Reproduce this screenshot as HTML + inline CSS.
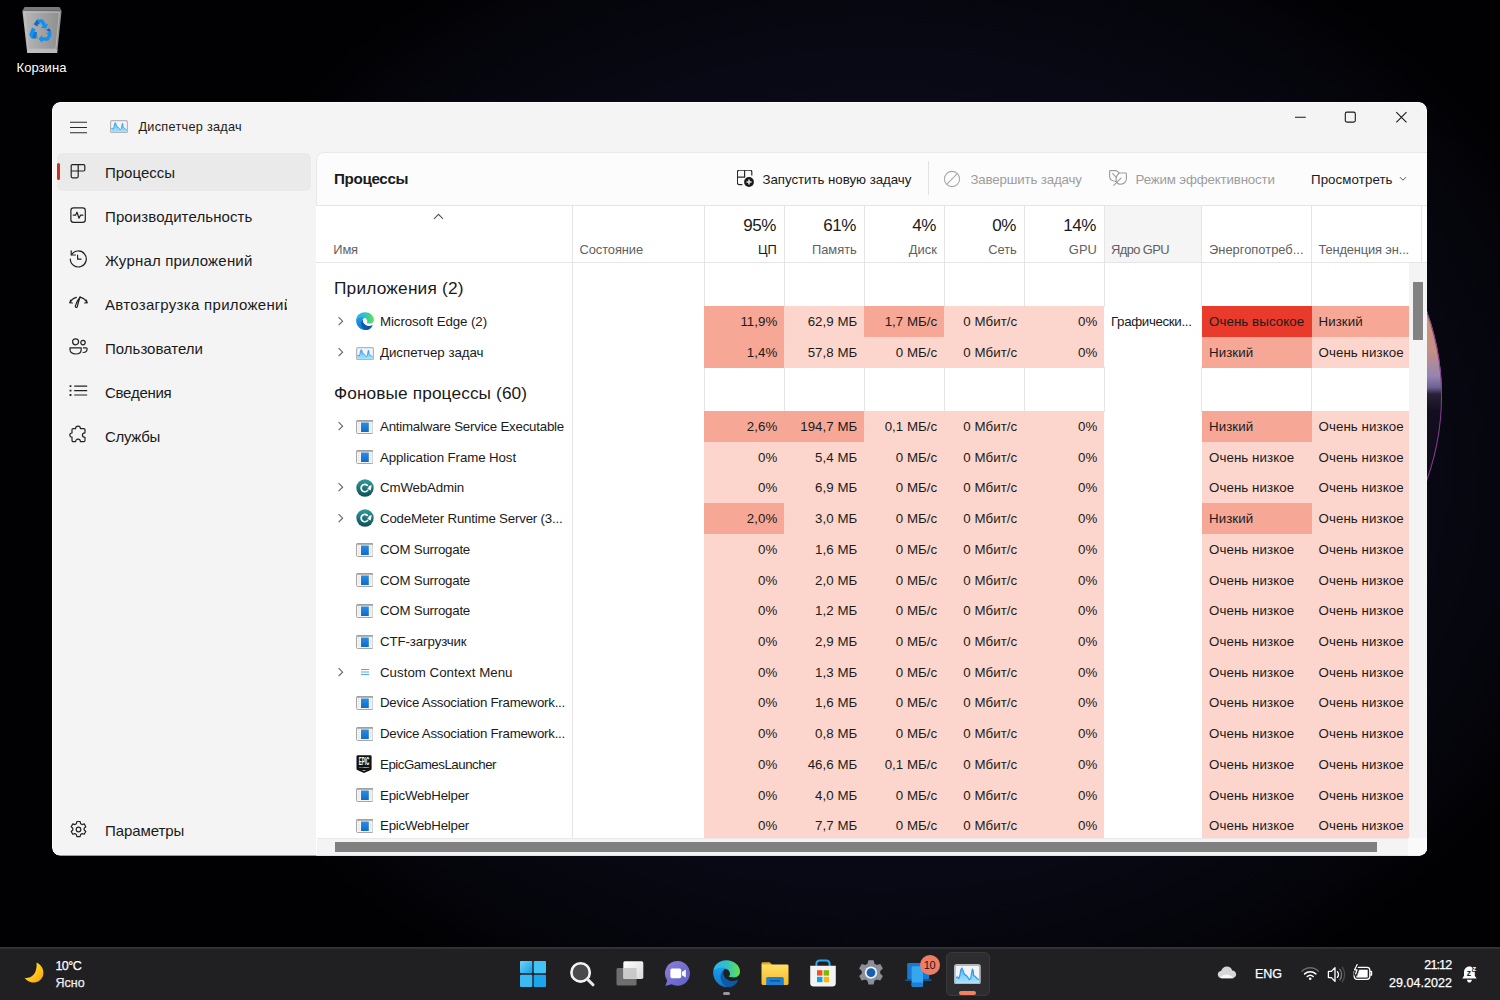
<!DOCTYPE html>
<html lang="ru"><head><meta charset="utf-8"><title>Диспетчер задач</title>
<style>
*{box-sizing:border-box;margin:0;padding:0}
html,body{width:1500px;height:1000px;overflow:hidden;background:#000}
body{position:relative;font-family:"Liberation Sans",sans-serif;color:#1a1a1a}
.abs,.t,.c,.ri,.chev,.ln,svg.a{position:absolute}
.t{white-space:nowrap;font-size:13.3px;line-height:20px;height:20px;color:#1b1b1b;letter-spacing:.08px}
.t.r{text-align:right}
.t.r{letter-spacing:.04px}
.c{display:block}
#desk{position:absolute;left:0;top:0;width:1500px;height:1000px;background:
 radial-gradient(ellipse 760px 600px at 880px 470px,#0e0d20 0%,#0c0b1c 45%,#090915 68%,#05050c 86%,#010103 100%)}
#orb{position:absolute;left:946px;top:148px;width:496px;height:496px;border-radius:50%;background:
 linear-gradient(to bottom,#c8937c 0%,#c8937c 36%,#c39084 41%,#9585b2 46%,#6d5f90 48.300%,#2a2138 49.600%,#130f1f 53%,#0c0916 70%,#0a0813 100%);box-shadow:inset 0 0 0 1px #8e3a94}
#clip{position:absolute;left:0;top:0;width:1500px;height:1000px;clip-path:inset(102px 73px 144.5px 52px round 8px)}
#win{position:absolute;left:52px;top:102px;width:1375px;height:753.5px;background:#f4f4f4;border-radius:8px;border:1px solid #fbfbfb}
#panel{position:absolute;left:316px;top:152px;width:1111px;height:704px;background:#fff;border-top-left-radius:8px;overflow:hidden}
#tool{position:absolute;left:316px;top:152px;width:1111px;height:54px;background:#fcfcfc;border-top-left-radius:8px;border-bottom:1px solid #e6e6e6;border-left:1px solid #e9e9e9;border-top:1px solid #e9e9e9}
.nav{position:absolute;left:105px;font-size:15px;line-height:22px;height:22px;color:#1a1a1a;white-space:nowrap}
.hd{position:absolute;font-size:12.9px;line-height:18px;color:#5f5f5f;white-space:nowrap}
.hp{position:absolute;font-size:17px;line-height:22px;color:#1a1a1a;text-align:right;white-space:nowrap}
.ln{background:#e5e5e5;width:1px}
.grp{position:absolute;left:334px;font-size:17.3px;line-height:24px;color:#1a1a1a;white-space:nowrap}
.tb{position:absolute;font-size:13.3px;line-height:20px;white-space:nowrap;color:#1a1a1a}
.tb.dis{color:#9d9d9d}
#bar{position:absolute;left:0;top:947px;width:1500px;height:53px;background:linear-gradient(to bottom,#353438 0,#333236 1.300px,#222224 2.300px,#202022 3px,#202022 100%)}
.tx{position:absolute;color:#fff;font-size:12px;line-height:16px;white-space:nowrap;-webkit-text-stroke:.25px #fff}
</style></head><body>
<svg width="0" height="0" style="position:absolute"><defs>
<linearGradient id="eg1" x1="0" y1="0" x2="0" y2="1"><stop offset="0" stop-color="#1f9be8"/><stop offset="1" stop-color="#0f76cf"/></linearGradient>
<linearGradient id="eg2" x1="0" y1="0" x2="1" y2="0"><stop offset="0" stop-color="#25b4f0"/><stop offset=".5" stop-color="#30c2c8"/><stop offset=".8" stop-color="#4fd57a"/><stop offset="1" stop-color="#6fe04e"/></linearGradient>
<linearGradient id="eg3" x1="0" y1="0" x2="1" y2="1"><stop offset="0" stop-color="#0b5fae"/><stop offset="1" stop-color="#0a58a6"/></linearGradient>
<g id="edgeico">
<path d="M.3 11C1 4.500 6.500.2 13.500.2 21 .2 27 5.500 27 11.500c0 3.500-2.500 5.900-6 5.900-2.500 0-4.400-.2-5.200-.8.800-.7 1.300-1.900 1.200-3.100-.3-3-3-5.300-7-5.300-4.500 0-8 1.300-9.700 2.800Z" fill="url(#eg2)"/>
<path d="M.3 11C2 8.800 5.800 7.400 10 7.400c1.300 0 2.500.3 3.500.8-1.800.6-3.300 2-4.200 3.800-2.400 4.600-.5 11 5.200 15.200C6.500 27.500-.8 20 .3 11Z" fill="url(#eg1)"/>
<path d="M10.400 10.800c-2 1.500-3.200 4-2.900 6.700.5 4.600 3.500 8.700 7 9.700 4.400.4 8.500-2.500 10.300-6.500.3-.6-.2-.9-.7-.6-1.700.9-3.700 1.200-5.700.9-4.500-.6-7.800-4-8.100-7.300-.1-1 0-2 .1-2.900Z" fill="url(#eg3)"/>
</g>
<linearGradient id="cmg" x1="0" y1="0" x2="0" y2="1"><stop offset="0" stop-color="#2f9a9c"/><stop offset="1" stop-color="#0e4f57"/></linearGradient>
<linearGradient id="exg" x1="0" y1="0" x2="0" y2="1"><stop offset="0" stop-color="#2a8ee2"/><stop offset="1" stop-color="#0f6cc9"/></linearGradient>
<linearGradient id="tmg" x1="0" y1="0" x2="0" y2="1"><stop offset="0" stop-color="#4db2f2"/><stop offset=".6" stop-color="#86d4fb"/><stop offset="1" stop-color="#a9e2fc"/></linearGradient>
<g id="tmico">
<rect x=".600" y=".600" width="16.800" height="12" rx="1.200" fill="#f1f5f9" stroke="#b4b6b9" stroke-width="1.200"/>
<path d="M1.300 11.900V8.600L2.200 8.300 3.200 9.200 4 7 4.600 3.600 5.300 2.600 6 4 7 6.600 8.400 7.400 9.400 8.600 10.200 10 11.200 9.200 11.800 6 12.300 3.200 12.900 4 13.200 7.400 14.400 8 15.600 9.400 16.700 10V11.900Z" fill="url(#tmg)"/>
<path d="M1.300 8.600L2.200 8.300 3.200 9.200 4 7 4.600 3.600 5.300 2.600 6 4 7 6.600 8.400 7.400 9.400 8.600 10.200 10 11.200 9.200 11.800 6 12.300 3.200 12.900 4 13.200 7.400 14.400 8 15.600 9.400 16.700 10" fill="none" stroke="#3b97e3" stroke-width=".800" stroke-linejoin="round"/>
</g>
</defs></svg>
<div id="desk"></div><div id="orb"></div>
<!--DESKTOP-->
<svg class="a" style="left:20px;top:5px" width="44" height="50" viewBox="0 0 44 50"><defs><linearGradient id="bg1" x1="0" y1="0" x2="1" y2="0"><stop offset="0" stop-color="#b9b9b9"/><stop offset=".5" stop-color="#a2a2a2"/><stop offset="1" stop-color="#8d8d8d"/></linearGradient></defs><path d="M4.600 2h34.800l2.200 3.800H2.400Z" fill="#7a7a7a"/><path d="M2.400 5.800h39.200L37.200 48H7.200Z" fill="url(#bg1)"/><path d="M4.400 7.200h35l-3.600 37H8.400Z" fill="none" stroke="#c6c6c6" stroke-width="1" opacity=".7"/><path d="M7 44.400h30.400l-.4 3.600H7.400Z" fill="#c2c2c2" opacity=".8"/>
<g fill="#1491ef"><path d="M17.200 14.400l5.600-.2 3.400 5.400 2-1-2 5.200-5.400-1.400 2-1.200-2.200-3.800-1.400 2.200-3.600-2.200Z"/><path d="M12 22.400l3.600 2.200-1.200 2.200 2.400.2-1.400 6.600-4.200-.4-2-3.400Z" /><path d="M31.200 26.400l.2 4.400-3 5h-6.200v2.200l-3.600-4 3.600-4v2.200h4.600l1.400-2.600-2.400-1.400Z"/></g>
<g fill="#0a62c4"><path d="M17.200 14.400l-3.600 4.800 3.600 2.200 1.600-2.800Z" opacity=".9"/><path d="M14.400 26.800l2.400.2.800 6.600-5.400-.200Z" opacity=".55"/><path d="M31.200 26.400l-2-3.200-3 1.800 2.400 1.400Z"/></g></svg>
<span class="abs" style="top:59px;left:16.500px;white-space:nowrap;color:#fff;font-size:13px;line-height:18px;text-shadow:0 1px 2px rgba(0,0,0,.9);letter-spacing:0.067px">Корзина</span>

<div id="clip">
<div id="win"></div>
<!--CHROME-->
<svg class="a" style="left:70px;top:121px" width="18" height="13" viewBox="0 0 18 13"><path d="M0 1.300h17M0 6.500h17M0 11.700h17" stroke="#2a2a2a" stroke-width="1.100"/></svg>
<svg class="a" style="left:110px;top:119.600px" width="18" height="13.200" viewBox="0 0 18 13.200"><use href="#tmico"/></svg>
<span class="abs" style="left:138.500px;top:117px;font-size:12.700px;line-height:20px;white-space:nowrap;color:#1a1a1a;letter-spacing:0.282px">Диспетчер задач</span>
<svg class="a" style="left:1294px;top:111px" width="114" height="13" viewBox="0 0 114 13">
<path d="M1 6.300h10.800" stroke="#1a1a1a" stroke-width="1.100"/>
<rect x="51.300" y="1.100" width="10" height="10" rx="1.600" fill="none" stroke="#1a1a1a" stroke-width="1.100"/>
<path d="M102.300 1.100L112.500 11.300M112.500 1.100L102.300 11.300" stroke="#1a1a1a" stroke-width="1.100"/>
</svg>
<!--SIDEBAR-->
<i class="abs" style="left:57px;top:152.500px;width:254px;height:38.500px;background:#eaeaea;border-radius:5px"></i>
<i class="abs" style="left:57px;top:163px;width:3px;height:17px;background:#c8301f;border-radius:2px"></i>
<span class="nav" style="top:161.500px;letter-spacing:-0.002px">Процессы</span>
<span class="nav" style="top:205.500px;letter-spacing:0.106px">Производительность</span>
<span class="nav" style="top:249.500px;letter-spacing:0.190px">Журнал приложений</span>
<span class="nav" style="top:293.500px;width:181.700px;overflow:hidden;letter-spacing:.3px">Автозагрузка приложений</span>
<span class="nav" style="top:337.500px;letter-spacing:0.008px">Пользователи</span>
<span class="nav" style="top:381.500px;letter-spacing:-0.254px">Сведения</span>
<span class="nav" style="top:425.500px;letter-spacing:-0.307px">Службы</span>
<span class="nav" style="top:819.500px;letter-spacing:-0.085px">Параметры</span>
<!-- processes -->
<svg class="a" style="left:70px;top:163px" width="16" height="16" viewBox="0 0 16 16" fill="none" stroke="#222" stroke-width="1.200"><path d="M2.400 1.600h11.200a1.200 1.200 0 0 1 1.200 1.200v4a1.200 1.200 0 0 1-1.200 1.200H8.200v5.600a1.200 1.200 0 0 1-1.200 1.200H2.400a1.200 1.200 0 0 1-1.200-1.200V2.800a1.200 1.200 0 0 1 1.200-1.200Z"/><path d="M8.200 1.600v6.400M1.200 8h7"/></svg>
<!-- performance -->
<svg class="a" style="left:70px;top:207px" width="16" height="16" viewBox="0 0 16 16" fill="none" stroke="#222" stroke-width="1.200"><rect x=".900" y=".900" width="14.400" height="14.400" rx="2.600"/><path d="M3.300 8.200h2.200l1.500-3 2 6 1.500-3h2.400" stroke-linejoin="round" stroke-linecap="round"/></svg>
<!-- history -->
<svg class="a" style="left:69px;top:249px" width="19" height="19" viewBox="0 0 19 19" fill="none" stroke="#222" stroke-width="1.200" stroke-linecap="round"><path d="M2.600 5.600A8 8 0 1 1 1.300 10"/><path d="M2.200 1.800v4.200h4.200"/><path d="M8.600 6v4.200h3.400"/></svg>
<!-- startup -->
<svg class="a" style="left:69px;top:295px" width="19" height="15" viewBox="0 0 19 15" fill="none" stroke="#222" stroke-width="1.200" stroke-linecap="round"><path d="M1 7.600A9.600 9.600 0 0 1 7.400 2.300M11.600 2.300A9.600 9.600 0 0 1 18 7.600"/><path d="M1.600 5.200L1 7.700l2.400.3M15.600 8l2.400-.3-.6-2.500"/><path d="M11.400 1.400C10 4.600 9 8.300 8.300 11.600c-.3 1.400-2.300.9-2-.5C7.400 7.600 9.200 4.200 11.400 1.400Z"/></svg>
<!-- users -->
<svg class="a" style="left:69px;top:338px" width="19" height="17" viewBox="0 0 19 17" fill="none" stroke="#222" stroke-width="1.200"><circle cx="6.600" cy="3.800" r="3"/><circle cx="14" cy="4.600" r="2.200"/><path d="M1 9.800h11.200v1.600c0 3-2.400 4.600-5.600 4.600S1 14.400 1 11.400Z" stroke-linejoin="round"/><path d="M14.400 9.800h2.800c.5 0 .9.400.9.900 0 2.400-1.500 3.800-4 3.800" stroke-linecap="round"/></svg>
<!-- details -->
<svg class="a" style="left:69px;top:384px" width="19" height="14" viewBox="0 0 19 14" fill="none" stroke="#222" stroke-width="1.200"><path d="M5.200 2.200h13M5.200 6.600h13M5.200 11h13"/><path d="M.600 2.200h1.800M.600 6.600h1.800M.600 11h1.800" stroke-width="1.800"/></svg>
<!-- services -->
<svg class="a" style="left:69px;top:425px" width="19" height="19" viewBox="0 0 19 19" fill="none" stroke="#222" stroke-width="1.200" stroke-linejoin="round"><path d="M6.600 3.600c0-1.400 1.100-2.400 2.400-2.400s2.400 1 2.400 2.400h3.400c.7 0 1.200.5 1.200 1.200v3c-1.500 0-2.600 1-2.600 2.300s1.100 2.300 2.600 2.300v3c0 .7-.5 1.200-1.200 1.200h-3.400c0-1.400-1.100-2.400-2.400-2.400s-2.400 1-2.400 2.400H4.200c-.7 0-1.200-.5-1.200-1.200v-3.200c-1.300 0-2.200-1-2.200-2.100s.9-2.100 2.200-2.100V4.800c0-.7.500-1.200 1.200-1.200Z"/></svg>
<!-- settings gear -->
<svg class="a" style="left:69px;top:820px" width="19" height="19" viewBox="0 0 19 19" fill="none" stroke="#222" stroke-width="1.200" stroke-linejoin="round"><circle cx="9.500" cy="9.500" r="2.300"/><path d="M7.900 1.500h3.200l.5 2.200 1.500.9 2.100-.7 1.600 2.800-1.600 1.500v1.800l1.600 1.500-1.600 2.800-2.100-.7-1.500.9-.5 2.200H7.900l-.5-2.200-1.500-.9-2.100.7-1.600-2.800 1.600-1.500V8.200L2.200 6.700l1.600-2.800 2.100.7 1.500-.9Z"/></svg>

<div id="panel"></div>
<div id="tool"></div>
<!--TOOLBAR-->
<span class="abs" style="left:334px;top:168px;font-size:15.200px;font-weight:700;line-height:22px;white-space:nowrap;color:#1a1a1a;letter-spacing:-.350px">Процессы</span>
<svg class="a" style="left:737px;top:170px" width="18" height="18" viewBox="0 0 18 18" fill="none" stroke="#2a2a2a" stroke-width="1.200"><path d="M5.400 14.600H2.200a1.800 1.800 0 0 1-1.800-1.800V2A1.800 1.800 0 0 1 2.200.2H13a1.800 1.800 0 0 1 1.800 1.800v3.400"/><path d="M7.600.2v7H.400"/><circle cx="12" cy="12" r="4.900" fill="#1b1b1b" stroke="none"/><path d="M12 9.500v5M9.500 12h5" stroke="#e9e9e9" stroke-width="1.500"/></svg>
<span class="tb" style="left:762.500px;top:169.500px;letter-spacing:-0.044px">Запустить новую задачу</span>
<i class="abs" style="left:928px;top:161px;width:1px;height:34px;background:#e2e2e2"></i>
<svg class="a" style="left:943px;top:169.500px" width="18" height="18" viewBox="0 0 18 18" fill="none" stroke="#a9a9a9" stroke-width="1.100"><circle cx="9" cy="9" r="7.600"/><path d="M3.700 14.300L14.300 3.700"/></svg>
<span class="tb dis" style="left:970.500px;top:169.500px;letter-spacing:-0.167px">Завершить задачу</span>
<svg class="a" style="left:1108.800px;top:170.200px" width="18" height="16" viewBox="0 0 18 16" fill="none" stroke="#9e9e9e" stroke-width="1.100" stroke-linecap="round" stroke-linejoin="round"><path d="M10.200 3.200C9.400 1.600 8 .600 6.200.600H1.400Q.600.600.600 1.400V6.500C.600 9.200 3.200 11 6.900 11.500"/><path d="M10 3H16.600Q17.400 3 17.400 3.800V9C17.400 12 14.500 14.200 11.200 14.200 9.500 14.200 8 13 7.200 11.400 6.800 9 7.400 5.500 10 3Z"/><path d="M12 8.200L4.800 15.400M3.600 3.600L6.900 6.800"/></svg>
<span class="tb dis" style="left:1135.500px;top:169.500px;letter-spacing:-0.153px">Режим эффективности</span>
<span class="tb" style="left:1311px;top:169.500px;letter-spacing:0.082px">Просмотреть</span>
<svg class="a" style="left:1399px;top:175.500px" width="8" height="6" viewBox="0 0 8 6" fill="none" stroke="#555" stroke-width="1"><path d="M1 1.200l3 3 3-3"/></svg>
<!--HEADER-->
<i class="abs" style="left:1104.500px;top:206px;width:97px;height:56px;background:#f5f5f5"></i>
<i class="abs" style="left:316px;top:262px;width:1111px;height:1px;background:#e6e6e6"></i>
<i class="ln" style="left:572px;top:206px;height:632px"></i>
<i class="ln" style="left:703.500px;top:206px;height:101px"></i>
<i class="ln" style="left:783.500px;top:206px;height:101px"></i>
<i class="ln" style="left:863.500px;top:206px;height:101px"></i>
<i class="ln" style="left:943.500px;top:206px;height:101px"></i>
<i class="ln" style="left:1023.500px;top:206px;height:101px"></i>
<i class="ln" style="left:1104px;top:206px;height:101px"></i>
<i class="ln" style="left:1201px;top:206px;height:101px"></i>
<i class="ln" style="left:1311px;top:206px;height:101px"></i>
<i class="ln" style="left:1420.500px;top:206px;height:56px"></i>
<i class="ln" style="left:703.500px;top:367px;height:45px"></i>
<i class="ln" style="left:783.500px;top:367px;height:45px"></i>
<i class="ln" style="left:863.500px;top:367px;height:45px"></i>
<i class="ln" style="left:943.500px;top:367px;height:45px"></i>
<i class="ln" style="left:1023.500px;top:367px;height:45px"></i>
<i class="ln" style="left:1104px;top:367px;height:45px"></i>
<i class="ln" style="left:1201px;top:367px;height:45px"></i>
<i class="ln" style="left:1311px;top:367px;height:45px"></i>
<svg class="a" style="left:433.300px;top:213px" width="11" height="7" viewBox="0 0 11 7" fill="none" stroke="#555" stroke-width="1.150"><path d="M1 5.800L5.500 1.400 10 5.800"/></svg>
<span class="hd" style="left:333.300px;top:241px;letter-spacing:-0.170px">Имя</span>
<span class="hd" style="left:579.500px;top:241px;letter-spacing:-0.092px">Состояние</span>
<span class="hp" style="left:704px;width:72px;letter-spacing:-.45px;top:215px">95%</span>
<span class="hp" style="left:784px;width:72px;letter-spacing:-.45px;top:215px">61%</span>
<span class="hp" style="left:864px;width:72px;letter-spacing:-.45px;top:215px">4%</span>
<span class="hp" style="left:944px;width:72px;letter-spacing:-.45px;top:215px">0%</span>
<span class="hp" style="left:1024px;width:72px;letter-spacing:-.45px;top:215px">14%</span>
<span class="hd" style="left:704px;width:72.800px;text-align:right;top:241px;color:#1a1a1a">ЦП</span>
<span class="hd" style="left:784px;width:72.800px;text-align:right;top:241px">Память</span>
<span class="hd" style="left:864px;width:72.800px;text-align:right;top:241px">Диск</span>
<span class="hd" style="left:944px;width:72.800px;text-align:right;top:241px">Сеть</span>
<span class="hd" style="left:1024px;width:72.800px;text-align:right;top:241px">GPU</span>
<span class="hd" style="left:1111px;top:241px;letter-spacing:-0.586px">Ядро GPU</span>
<span class="hd" style="left:1209px;top:241px;letter-spacing:0.006px">Энергопотреб...</span>
<span class="hd" style="left:1318.500px;top:241px;letter-spacing:-0.156px">Тенденция эн...</span>
<span class="grp" style="top:276px;letter-spacing:0.191px">Приложения (2)</span>
<span class="grp" style="top:381px;letter-spacing:0.102px">Фоновые процессы (60)</span>

<i class="c" style="left:704px;top:306.4px;width:80px;height:30.72px;background:#f6a796"></i>
<i class="c" style="left:784px;top:306.4px;width:80px;height:30.72px;background:#fcd6cc"></i>
<i class="c" style="left:864px;top:306.4px;width:80px;height:30.72px;background:#f6a796"></i>
<i class="c" style="left:944px;top:306.4px;width:80px;height:30.72px;background:#fcd6cc"></i>
<i class="c" style="left:1024px;top:306.4px;width:80px;height:30.72px;background:#fcd6cc"></i>
<i class="c" style="left:1202px;top:306.4px;width:109.5px;height:30.72px;background:#e83b2b"></i>
<i class="c" style="left:1311.5px;top:306.4px;width:97px;height:30.72px;background:#f6a796"></i>
<svg class="chev" style="left:337px;top:316.16px" width="8" height="11" viewBox="0 0 8 11"><path d="M1.6 1.2L5.6 5.2L1.6 9.2" fill="none" stroke="#666" stroke-width="1.15"/></svg>
<svg class="ri" style="left:355.5px;top:311.76px" width="18" height="18.300" viewBox="0 0 27 27.500"><use href="#edgeico"/></svg>
<span class="t n" style="left:380px;top:312.31px;letter-spacing:-0.091px">Microsoft Edge (2)</span>
<span class="t r" style="left:704px;width:73.3px;top:312.31px">11,9%</span>
<span class="t r" style="left:784px;width:73.3px;top:312.31px">62,9 МБ</span>
<span class="t r" style="left:864px;width:73.3px;top:312.31px">1,7 МБ/с</span>
<span class="t r" style="left:944px;width:73.3px;top:312.31px">0 Мбит/с</span>
<span class="t r" style="left:1024px;width:73.3px;top:312.31px">0%</span>
<span class="t" style="left:1111px;top:312.31px;letter-spacing:-0.340px">Графически...</span>
<span class="t" style="left:1209px;top:312.31px">Очень высокое</span>
<span class="t" style="left:1318.5px;top:312.31px">Низкий</span>
<i class="c" style="left:704px;top:337.12px;width:80px;height:30.72px;background:#f6a796"></i>
<i class="c" style="left:784px;top:337.12px;width:80px;height:30.72px;background:#fcd6cc"></i>
<i class="c" style="left:864px;top:337.12px;width:80px;height:30.72px;background:#fcd6cc"></i>
<i class="c" style="left:944px;top:337.12px;width:80px;height:30.72px;background:#fcd6cc"></i>
<i class="c" style="left:1024px;top:337.12px;width:80px;height:30.72px;background:#fcd6cc"></i>
<i class="c" style="left:1202px;top:337.12px;width:109.5px;height:30.72px;background:#f6a796"></i>
<i class="c" style="left:1311.5px;top:337.12px;width:97px;height:30.72px;background:#fcd6cc"></i>
<svg class="chev" style="left:337px;top:346.88px" width="8" height="11" viewBox="0 0 8 11"><path d="M1.6 1.2L5.6 5.2L1.6 9.2" fill="none" stroke="#666" stroke-width="1.15"/></svg>
<svg class="ri" style="left:355.5px;top:346.68px" width="18" height="13.200" viewBox="0 0 18 13.200"><use href="#tmico"/></svg>
<span class="t n" style="left:380px;top:343.03px;letter-spacing:-0.035px">Диспетчер задач</span>
<span class="t r" style="left:704px;width:73.3px;top:343.03px">1,4%</span>
<span class="t r" style="left:784px;width:73.3px;top:343.03px">57,8 МБ</span>
<span class="t r" style="left:864px;width:73.3px;top:343.03px">0 МБ/с</span>
<span class="t r" style="left:944px;width:73.3px;top:343.03px">0 Мбит/с</span>
<span class="t r" style="left:1024px;width:73.3px;top:343.03px">0%</span>
<span class="t" style="left:1209px;top:343.03px">Низкий</span>
<span class="t" style="left:1318.5px;top:343.03px">Очень низкое</span>
<i class="c" style="left:704px;top:411.1px;width:80px;height:30.72px;background:#f6a796"></i>
<i class="c" style="left:784px;top:411.1px;width:80px;height:30.72px;background:#f6a796"></i>
<i class="c" style="left:864px;top:411.1px;width:80px;height:30.72px;background:#fcd6cc"></i>
<i class="c" style="left:944px;top:411.1px;width:80px;height:30.72px;background:#fcd6cc"></i>
<i class="c" style="left:1024px;top:411.1px;width:80px;height:30.72px;background:#fcd6cc"></i>
<i class="c" style="left:1202px;top:411.1px;width:109.5px;height:30.72px;background:#f6a796"></i>
<i class="c" style="left:1311.5px;top:411.1px;width:97px;height:30.72px;background:#fcd6cc"></i>
<svg class="chev" style="left:337px;top:420.86px" width="8" height="11" viewBox="0 0 8 11"><path d="M1.6 1.2L5.6 5.2L1.6 9.2" fill="none" stroke="#666" stroke-width="1.15"/></svg>
<svg class="ri" style="left:355.7px;top:419.76px" width="17.600" height="14" viewBox="0 0 17.600 14"><rect x=".500" y=".500" width="16.600" height="13" rx="1.200" fill="#f7f7f7" stroke="#a6a6a6"/><rect x=".500" y=".300" width="16.600" height="1.500" rx=".600" fill="#9f9f9f"/><rect x="5" y="2.500" width="7.800" height="9.500" fill="url(#exg)"/><path d="M2.900 2.600V12M14.800 2.600V12" stroke="#cfcfcf" stroke-width=".900" stroke-dasharray="1.200 1.100"/></svg>
<span class="t n" style="left:380px;top:417.01px;letter-spacing:-0.223px">Antimalware Service Executable</span>
<span class="t r" style="left:704px;width:73.3px;top:417.01px">2,6%</span>
<span class="t r" style="left:784px;width:73.3px;top:417.01px">194,7 МБ</span>
<span class="t r" style="left:864px;width:73.3px;top:417.01px">0,1 МБ/с</span>
<span class="t r" style="left:944px;width:73.3px;top:417.01px">0 Мбит/с</span>
<span class="t r" style="left:1024px;width:73.3px;top:417.01px">0%</span>
<span class="t" style="left:1209px;top:417.01px">Низкий</span>
<span class="t" style="left:1318.5px;top:417.01px">Очень низкое</span>
<i class="c" style="left:704px;top:441.82px;width:80px;height:30.72px;background:#fcd6cc"></i>
<i class="c" style="left:784px;top:441.82px;width:80px;height:30.72px;background:#fcd6cc"></i>
<i class="c" style="left:864px;top:441.82px;width:80px;height:30.72px;background:#fcd6cc"></i>
<i class="c" style="left:944px;top:441.82px;width:80px;height:30.72px;background:#fcd6cc"></i>
<i class="c" style="left:1024px;top:441.82px;width:80px;height:30.72px;background:#fcd6cc"></i>
<i class="c" style="left:1202px;top:441.82px;width:109.5px;height:30.72px;background:#fcd6cc"></i>
<i class="c" style="left:1311.5px;top:441.82px;width:97px;height:30.72px;background:#fcd6cc"></i>
<svg class="ri" style="left:355.7px;top:450.48px" width="17.600" height="14" viewBox="0 0 17.600 14"><rect x=".500" y=".500" width="16.600" height="13" rx="1.200" fill="#f7f7f7" stroke="#a6a6a6"/><rect x=".500" y=".300" width="16.600" height="1.500" rx=".600" fill="#9f9f9f"/><rect x="5" y="2.500" width="7.800" height="9.500" fill="url(#exg)"/><path d="M2.900 2.600V12M14.800 2.600V12" stroke="#cfcfcf" stroke-width=".900" stroke-dasharray="1.200 1.100"/></svg>
<span class="t n" style="left:380px;top:447.73px;letter-spacing:-0.100px">Application Frame Host</span>
<span class="t r" style="left:704px;width:73.3px;top:447.73px">0%</span>
<span class="t r" style="left:784px;width:73.3px;top:447.73px">5,4 МБ</span>
<span class="t r" style="left:864px;width:73.3px;top:447.73px">0 МБ/с</span>
<span class="t r" style="left:944px;width:73.3px;top:447.73px">0 Мбит/с</span>
<span class="t r" style="left:1024px;width:73.3px;top:447.73px">0%</span>
<span class="t" style="left:1209px;top:447.73px">Очень низкое</span>
<span class="t" style="left:1318.5px;top:447.73px">Очень низкое</span>
<i class="c" style="left:704px;top:472.54px;width:80px;height:30.72px;background:#fcd6cc"></i>
<i class="c" style="left:784px;top:472.54px;width:80px;height:30.72px;background:#fcd6cc"></i>
<i class="c" style="left:864px;top:472.54px;width:80px;height:30.72px;background:#fcd6cc"></i>
<i class="c" style="left:944px;top:472.54px;width:80px;height:30.72px;background:#fcd6cc"></i>
<i class="c" style="left:1024px;top:472.54px;width:80px;height:30.72px;background:#fcd6cc"></i>
<i class="c" style="left:1202px;top:472.54px;width:109.5px;height:30.72px;background:#fcd6cc"></i>
<i class="c" style="left:1311.5px;top:472.54px;width:97px;height:30.72px;background:#fcd6cc"></i>
<svg class="chev" style="left:337px;top:482.3px" width="8" height="11" viewBox="0 0 8 11"><path d="M1.6 1.2L5.6 5.2L1.6 9.2" fill="none" stroke="#666" stroke-width="1.15"/></svg>
<svg class="ri" style="left:355.5px;top:478.7px" width="18" height="18" viewBox="0 0 18 18"><circle cx="9" cy="9" r="8.7" fill="url(#cmg)"/><path d="M11.300 6.300A3.700 3.700 0 1 0 11.600 11.500" fill="none" stroke="#fff" stroke-width="1.700" stroke-linecap="round"/><path d="M9.800 8.200L12 9.600L13 6.800L15.800 6.200L14.600 11.600L12.600 10.400Z" fill="#fff"/></svg>
<span class="t n" style="left:380px;top:478.45px;letter-spacing:-0.148px">CmWebAdmin</span>
<span class="t r" style="left:704px;width:73.3px;top:478.45px">0%</span>
<span class="t r" style="left:784px;width:73.3px;top:478.45px">6,9 МБ</span>
<span class="t r" style="left:864px;width:73.3px;top:478.45px">0 МБ/с</span>
<span class="t r" style="left:944px;width:73.3px;top:478.45px">0 Мбит/с</span>
<span class="t r" style="left:1024px;width:73.3px;top:478.45px">0%</span>
<span class="t" style="left:1209px;top:478.45px">Очень низкое</span>
<span class="t" style="left:1318.5px;top:478.45px">Очень низкое</span>
<i class="c" style="left:704px;top:503.26px;width:80px;height:30.72px;background:#f6a796"></i>
<i class="c" style="left:784px;top:503.26px;width:80px;height:30.72px;background:#fcd6cc"></i>
<i class="c" style="left:864px;top:503.26px;width:80px;height:30.72px;background:#fcd6cc"></i>
<i class="c" style="left:944px;top:503.26px;width:80px;height:30.72px;background:#fcd6cc"></i>
<i class="c" style="left:1024px;top:503.26px;width:80px;height:30.72px;background:#fcd6cc"></i>
<i class="c" style="left:1202px;top:503.26px;width:109.5px;height:30.72px;background:#f6a796"></i>
<i class="c" style="left:1311.5px;top:503.26px;width:97px;height:30.72px;background:#fcd6cc"></i>
<svg class="chev" style="left:337px;top:513.02px" width="8" height="11" viewBox="0 0 8 11"><path d="M1.6 1.2L5.6 5.2L1.6 9.2" fill="none" stroke="#666" stroke-width="1.15"/></svg>
<svg class="ri" style="left:355.5px;top:509.42px" width="18" height="18" viewBox="0 0 18 18"><circle cx="9" cy="9" r="8.7" fill="url(#cmg)"/><path d="M11.300 6.300A3.700 3.700 0 1 0 11.600 11.500" fill="none" stroke="#fff" stroke-width="1.700" stroke-linecap="round"/><path d="M9.800 8.200L12 9.600L13 6.800L15.800 6.200L14.600 11.600L12.600 10.400Z" fill="#fff"/></svg>
<span class="t n" style="left:380px;top:509.17px;letter-spacing:-0.198px">CodeMeter Runtime Server (3...</span>
<span class="t r" style="left:704px;width:73.3px;top:509.17px">2,0%</span>
<span class="t r" style="left:784px;width:73.3px;top:509.17px">3,0 МБ</span>
<span class="t r" style="left:864px;width:73.3px;top:509.17px">0 МБ/с</span>
<span class="t r" style="left:944px;width:73.3px;top:509.17px">0 Мбит/с</span>
<span class="t r" style="left:1024px;width:73.3px;top:509.17px">0%</span>
<span class="t" style="left:1209px;top:509.17px">Низкий</span>
<span class="t" style="left:1318.5px;top:509.17px">Очень низкое</span>
<i class="c" style="left:704px;top:533.98px;width:80px;height:30.72px;background:#fcd6cc"></i>
<i class="c" style="left:784px;top:533.98px;width:80px;height:30.72px;background:#fcd6cc"></i>
<i class="c" style="left:864px;top:533.98px;width:80px;height:30.72px;background:#fcd6cc"></i>
<i class="c" style="left:944px;top:533.98px;width:80px;height:30.72px;background:#fcd6cc"></i>
<i class="c" style="left:1024px;top:533.98px;width:80px;height:30.72px;background:#fcd6cc"></i>
<i class="c" style="left:1202px;top:533.98px;width:109.5px;height:30.72px;background:#fcd6cc"></i>
<i class="c" style="left:1311.5px;top:533.98px;width:97px;height:30.72px;background:#fcd6cc"></i>
<svg class="ri" style="left:355.7px;top:542.64px" width="17.600" height="14" viewBox="0 0 17.600 14"><rect x=".500" y=".500" width="16.600" height="13" rx="1.200" fill="#f7f7f7" stroke="#a6a6a6"/><rect x=".500" y=".300" width="16.600" height="1.500" rx=".600" fill="#9f9f9f"/><rect x="5" y="2.500" width="7.800" height="9.500" fill="url(#exg)"/><path d="M2.900 2.600V12M14.800 2.600V12" stroke="#cfcfcf" stroke-width=".900" stroke-dasharray="1.200 1.100"/></svg>
<span class="t n" style="left:380px;top:539.89px;letter-spacing:-0.240px">COM Surrogate</span>
<span class="t r" style="left:704px;width:73.3px;top:539.89px">0%</span>
<span class="t r" style="left:784px;width:73.3px;top:539.89px">1,6 МБ</span>
<span class="t r" style="left:864px;width:73.3px;top:539.89px">0 МБ/с</span>
<span class="t r" style="left:944px;width:73.3px;top:539.89px">0 Мбит/с</span>
<span class="t r" style="left:1024px;width:73.3px;top:539.89px">0%</span>
<span class="t" style="left:1209px;top:539.89px">Очень низкое</span>
<span class="t" style="left:1318.5px;top:539.89px">Очень низкое</span>
<i class="c" style="left:704px;top:564.7px;width:80px;height:30.72px;background:#fcd6cc"></i>
<i class="c" style="left:784px;top:564.7px;width:80px;height:30.72px;background:#fcd6cc"></i>
<i class="c" style="left:864px;top:564.7px;width:80px;height:30.72px;background:#fcd6cc"></i>
<i class="c" style="left:944px;top:564.7px;width:80px;height:30.72px;background:#fcd6cc"></i>
<i class="c" style="left:1024px;top:564.7px;width:80px;height:30.72px;background:#fcd6cc"></i>
<i class="c" style="left:1202px;top:564.7px;width:109.5px;height:30.72px;background:#fcd6cc"></i>
<i class="c" style="left:1311.5px;top:564.7px;width:97px;height:30.72px;background:#fcd6cc"></i>
<svg class="ri" style="left:355.7px;top:573.36px" width="17.600" height="14" viewBox="0 0 17.600 14"><rect x=".500" y=".500" width="16.600" height="13" rx="1.200" fill="#f7f7f7" stroke="#a6a6a6"/><rect x=".500" y=".300" width="16.600" height="1.500" rx=".600" fill="#9f9f9f"/><rect x="5" y="2.500" width="7.800" height="9.500" fill="url(#exg)"/><path d="M2.900 2.600V12M14.800 2.600V12" stroke="#cfcfcf" stroke-width=".900" stroke-dasharray="1.200 1.100"/></svg>
<span class="t n" style="left:380px;top:570.61px;letter-spacing:-0.240px">COM Surrogate</span>
<span class="t r" style="left:704px;width:73.3px;top:570.61px">0%</span>
<span class="t r" style="left:784px;width:73.3px;top:570.61px">2,0 МБ</span>
<span class="t r" style="left:864px;width:73.3px;top:570.61px">0 МБ/с</span>
<span class="t r" style="left:944px;width:73.3px;top:570.61px">0 Мбит/с</span>
<span class="t r" style="left:1024px;width:73.3px;top:570.61px">0%</span>
<span class="t" style="left:1209px;top:570.61px">Очень низкое</span>
<span class="t" style="left:1318.5px;top:570.61px">Очень низкое</span>
<i class="c" style="left:704px;top:595.42px;width:80px;height:30.72px;background:#fcd6cc"></i>
<i class="c" style="left:784px;top:595.42px;width:80px;height:30.72px;background:#fcd6cc"></i>
<i class="c" style="left:864px;top:595.42px;width:80px;height:30.72px;background:#fcd6cc"></i>
<i class="c" style="left:944px;top:595.42px;width:80px;height:30.72px;background:#fcd6cc"></i>
<i class="c" style="left:1024px;top:595.42px;width:80px;height:30.72px;background:#fcd6cc"></i>
<i class="c" style="left:1202px;top:595.42px;width:109.5px;height:30.72px;background:#fcd6cc"></i>
<i class="c" style="left:1311.5px;top:595.42px;width:97px;height:30.72px;background:#fcd6cc"></i>
<svg class="ri" style="left:355.7px;top:604.08px" width="17.600" height="14" viewBox="0 0 17.600 14"><rect x=".500" y=".500" width="16.600" height="13" rx="1.200" fill="#f7f7f7" stroke="#a6a6a6"/><rect x=".500" y=".300" width="16.600" height="1.500" rx=".600" fill="#9f9f9f"/><rect x="5" y="2.500" width="7.800" height="9.500" fill="url(#exg)"/><path d="M2.900 2.600V12M14.800 2.600V12" stroke="#cfcfcf" stroke-width=".900" stroke-dasharray="1.200 1.100"/></svg>
<span class="t n" style="left:380px;top:601.33px;letter-spacing:-0.240px">COM Surrogate</span>
<span class="t r" style="left:704px;width:73.3px;top:601.33px">0%</span>
<span class="t r" style="left:784px;width:73.3px;top:601.33px">1,2 МБ</span>
<span class="t r" style="left:864px;width:73.3px;top:601.33px">0 МБ/с</span>
<span class="t r" style="left:944px;width:73.3px;top:601.33px">0 Мбит/с</span>
<span class="t r" style="left:1024px;width:73.3px;top:601.33px">0%</span>
<span class="t" style="left:1209px;top:601.33px">Очень низкое</span>
<span class="t" style="left:1318.5px;top:601.33px">Очень низкое</span>
<i class="c" style="left:704px;top:626.14px;width:80px;height:30.72px;background:#fcd6cc"></i>
<i class="c" style="left:784px;top:626.14px;width:80px;height:30.72px;background:#fcd6cc"></i>
<i class="c" style="left:864px;top:626.14px;width:80px;height:30.72px;background:#fcd6cc"></i>
<i class="c" style="left:944px;top:626.14px;width:80px;height:30.72px;background:#fcd6cc"></i>
<i class="c" style="left:1024px;top:626.14px;width:80px;height:30.72px;background:#fcd6cc"></i>
<i class="c" style="left:1202px;top:626.14px;width:109.5px;height:30.72px;background:#fcd6cc"></i>
<i class="c" style="left:1311.5px;top:626.14px;width:97px;height:30.72px;background:#fcd6cc"></i>
<svg class="ri" style="left:355.7px;top:634.8px" width="17.600" height="14" viewBox="0 0 17.600 14"><rect x=".500" y=".500" width="16.600" height="13" rx="1.200" fill="#f7f7f7" stroke="#a6a6a6"/><rect x=".500" y=".300" width="16.600" height="1.500" rx=".600" fill="#9f9f9f"/><rect x="5" y="2.500" width="7.800" height="9.500" fill="url(#exg)"/><path d="M2.900 2.600V12M14.800 2.600V12" stroke="#cfcfcf" stroke-width=".900" stroke-dasharray="1.200 1.100"/></svg>
<span class="t n" style="left:380px;top:632.05px;letter-spacing:-0.142px">CTF-загрузчик</span>
<span class="t r" style="left:704px;width:73.3px;top:632.05px">0%</span>
<span class="t r" style="left:784px;width:73.3px;top:632.05px">2,9 МБ</span>
<span class="t r" style="left:864px;width:73.3px;top:632.05px">0 МБ/с</span>
<span class="t r" style="left:944px;width:73.3px;top:632.05px">0 Мбит/с</span>
<span class="t r" style="left:1024px;width:73.3px;top:632.05px">0%</span>
<span class="t" style="left:1209px;top:632.05px">Очень низкое</span>
<span class="t" style="left:1318.5px;top:632.05px">Очень низкое</span>
<i class="c" style="left:704px;top:656.86px;width:80px;height:30.72px;background:#fcd6cc"></i>
<i class="c" style="left:784px;top:656.86px;width:80px;height:30.72px;background:#fcd6cc"></i>
<i class="c" style="left:864px;top:656.86px;width:80px;height:30.72px;background:#fcd6cc"></i>
<i class="c" style="left:944px;top:656.86px;width:80px;height:30.72px;background:#fcd6cc"></i>
<i class="c" style="left:1024px;top:656.86px;width:80px;height:30.72px;background:#fcd6cc"></i>
<i class="c" style="left:1202px;top:656.86px;width:109.5px;height:30.72px;background:#fcd6cc"></i>
<i class="c" style="left:1311.5px;top:656.86px;width:97px;height:30.72px;background:#fcd6cc"></i>
<svg class="chev" style="left:337px;top:666.62px" width="8" height="11" viewBox="0 0 8 11"><path d="M1.6 1.2L5.6 5.2L1.6 9.2" fill="none" stroke="#666" stroke-width="1.15"/></svg>
<svg class="ri" style="left:355.5px;top:663.02px" width="18" height="18" viewBox="0 0 18 18"><path d="M5 6.5h8M5 9h8M5 11.5h8" stroke="#5aa9e6" stroke-width="1.1"/></svg>
<span class="t n" style="left:380px;top:662.77px;letter-spacing:0.011px">Custom Context Menu</span>
<span class="t r" style="left:704px;width:73.3px;top:662.77px">0%</span>
<span class="t r" style="left:784px;width:73.3px;top:662.77px">1,3 МБ</span>
<span class="t r" style="left:864px;width:73.3px;top:662.77px">0 МБ/с</span>
<span class="t r" style="left:944px;width:73.3px;top:662.77px">0 Мбит/с</span>
<span class="t r" style="left:1024px;width:73.3px;top:662.77px">0%</span>
<span class="t" style="left:1209px;top:662.77px">Очень низкое</span>
<span class="t" style="left:1318.5px;top:662.77px">Очень низкое</span>
<i class="c" style="left:704px;top:687.58px;width:80px;height:30.72px;background:#fcd6cc"></i>
<i class="c" style="left:784px;top:687.58px;width:80px;height:30.72px;background:#fcd6cc"></i>
<i class="c" style="left:864px;top:687.58px;width:80px;height:30.72px;background:#fcd6cc"></i>
<i class="c" style="left:944px;top:687.58px;width:80px;height:30.72px;background:#fcd6cc"></i>
<i class="c" style="left:1024px;top:687.58px;width:80px;height:30.72px;background:#fcd6cc"></i>
<i class="c" style="left:1202px;top:687.58px;width:109.5px;height:30.72px;background:#fcd6cc"></i>
<i class="c" style="left:1311.5px;top:687.58px;width:97px;height:30.72px;background:#fcd6cc"></i>
<svg class="ri" style="left:355.7px;top:696.24px" width="17.600" height="14" viewBox="0 0 17.600 14"><rect x=".500" y=".500" width="16.600" height="13" rx="1.200" fill="#f7f7f7" stroke="#a6a6a6"/><rect x=".500" y=".300" width="16.600" height="1.500" rx=".600" fill="#9f9f9f"/><rect x="5" y="2.500" width="7.800" height="9.500" fill="url(#exg)"/><path d="M2.900 2.600V12M14.800 2.600V12" stroke="#cfcfcf" stroke-width=".900" stroke-dasharray="1.200 1.100"/></svg>
<span class="t n" style="left:380px;top:693.49px;letter-spacing:-0.254px">Device Association Framework...</span>
<span class="t r" style="left:704px;width:73.3px;top:693.49px">0%</span>
<span class="t r" style="left:784px;width:73.3px;top:693.49px">1,6 МБ</span>
<span class="t r" style="left:864px;width:73.3px;top:693.49px">0 МБ/с</span>
<span class="t r" style="left:944px;width:73.3px;top:693.49px">0 Мбит/с</span>
<span class="t r" style="left:1024px;width:73.3px;top:693.49px">0%</span>
<span class="t" style="left:1209px;top:693.49px">Очень низкое</span>
<span class="t" style="left:1318.5px;top:693.49px">Очень низкое</span>
<i class="c" style="left:704px;top:718.3px;width:80px;height:30.72px;background:#fcd6cc"></i>
<i class="c" style="left:784px;top:718.3px;width:80px;height:30.72px;background:#fcd6cc"></i>
<i class="c" style="left:864px;top:718.3px;width:80px;height:30.72px;background:#fcd6cc"></i>
<i class="c" style="left:944px;top:718.3px;width:80px;height:30.72px;background:#fcd6cc"></i>
<i class="c" style="left:1024px;top:718.3px;width:80px;height:30.72px;background:#fcd6cc"></i>
<i class="c" style="left:1202px;top:718.3px;width:109.5px;height:30.72px;background:#fcd6cc"></i>
<i class="c" style="left:1311.5px;top:718.3px;width:97px;height:30.72px;background:#fcd6cc"></i>
<svg class="ri" style="left:355.7px;top:726.96px" width="17.600" height="14" viewBox="0 0 17.600 14"><rect x=".500" y=".500" width="16.600" height="13" rx="1.200" fill="#f7f7f7" stroke="#a6a6a6"/><rect x=".500" y=".300" width="16.600" height="1.500" rx=".600" fill="#9f9f9f"/><rect x="5" y="2.500" width="7.800" height="9.500" fill="url(#exg)"/><path d="M2.900 2.600V12M14.800 2.600V12" stroke="#cfcfcf" stroke-width=".900" stroke-dasharray="1.200 1.100"/></svg>
<span class="t n" style="left:380px;top:724.21px;letter-spacing:-0.254px">Device Association Framework...</span>
<span class="t r" style="left:704px;width:73.3px;top:724.21px">0%</span>
<span class="t r" style="left:784px;width:73.3px;top:724.21px">0,8 МБ</span>
<span class="t r" style="left:864px;width:73.3px;top:724.21px">0 МБ/с</span>
<span class="t r" style="left:944px;width:73.3px;top:724.21px">0 Мбит/с</span>
<span class="t r" style="left:1024px;width:73.3px;top:724.21px">0%</span>
<span class="t" style="left:1209px;top:724.21px">Очень низкое</span>
<span class="t" style="left:1318.5px;top:724.21px">Очень низкое</span>
<i class="c" style="left:704px;top:749.02px;width:80px;height:30.72px;background:#fcd6cc"></i>
<i class="c" style="left:784px;top:749.02px;width:80px;height:30.72px;background:#fcd6cc"></i>
<i class="c" style="left:864px;top:749.02px;width:80px;height:30.72px;background:#fcd6cc"></i>
<i class="c" style="left:944px;top:749.02px;width:80px;height:30.72px;background:#fcd6cc"></i>
<i class="c" style="left:1024px;top:749.02px;width:80px;height:30.72px;background:#fcd6cc"></i>
<i class="c" style="left:1202px;top:749.02px;width:109.5px;height:30.72px;background:#fcd6cc"></i>
<i class="c" style="left:1311.5px;top:749.02px;width:97px;height:30.72px;background:#fcd6cc"></i>
<svg class="ri" style="left:354.8px;top:755.08px" width="18" height="18" viewBox="0 0 18 18"><path d="M1.500 1.600Q1.500 .300 2.800 .300H15.300Q16.600 .300 16.600 1.600V13.800Q16.600 14.600 15.800 15L9 17.900L2.300 15Q1.500 14.600 1.500 13.800Z" fill="#111"/><text x="9.050" y="10" font-family="Liberation Sans,sans-serif" font-size="10" font-weight="700" fill="#fff" text-anchor="middle" textLength="10.600" lengthAdjust="spacingAndGlyphs">EPIC</text><text x="9.050" y="12.900" font-family="Liberation Sans,sans-serif" font-size="2.400" font-weight="700" fill="#e8e8e8" text-anchor="middle" textLength="10" lengthAdjust="spacingAndGlyphs">GAMES</text><path d="M6.600 14.900h4.800l-2.400 1.200z" fill="#ccc"/></svg>
<span class="t n" style="left:380px;top:754.93px;letter-spacing:-0.481px">EpicGamesLauncher</span>
<span class="t r" style="left:704px;width:73.3px;top:754.93px">0%</span>
<span class="t r" style="left:784px;width:73.3px;top:754.93px">46,6 МБ</span>
<span class="t r" style="left:864px;width:73.3px;top:754.93px">0,1 МБ/с</span>
<span class="t r" style="left:944px;width:73.3px;top:754.93px">0 Мбит/с</span>
<span class="t r" style="left:1024px;width:73.3px;top:754.93px">0%</span>
<span class="t" style="left:1209px;top:754.93px">Очень низкое</span>
<span class="t" style="left:1318.5px;top:754.93px">Очень низкое</span>
<i class="c" style="left:704px;top:779.74px;width:80px;height:30.72px;background:#fcd6cc"></i>
<i class="c" style="left:784px;top:779.74px;width:80px;height:30.72px;background:#fcd6cc"></i>
<i class="c" style="left:864px;top:779.74px;width:80px;height:30.72px;background:#fcd6cc"></i>
<i class="c" style="left:944px;top:779.74px;width:80px;height:30.72px;background:#fcd6cc"></i>
<i class="c" style="left:1024px;top:779.74px;width:80px;height:30.72px;background:#fcd6cc"></i>
<i class="c" style="left:1202px;top:779.74px;width:109.5px;height:30.72px;background:#fcd6cc"></i>
<i class="c" style="left:1311.5px;top:779.74px;width:97px;height:30.72px;background:#fcd6cc"></i>
<svg class="ri" style="left:355.7px;top:788.4px" width="17.600" height="14" viewBox="0 0 17.600 14"><rect x=".500" y=".500" width="16.600" height="13" rx="1.200" fill="#f7f7f7" stroke="#a6a6a6"/><rect x=".500" y=".300" width="16.600" height="1.500" rx=".600" fill="#9f9f9f"/><rect x="5" y="2.500" width="7.800" height="9.500" fill="url(#exg)"/><path d="M2.900 2.600V12M14.800 2.600V12" stroke="#cfcfcf" stroke-width=".900" stroke-dasharray="1.200 1.100"/></svg>
<span class="t n" style="left:380px;top:785.65px;letter-spacing:-0.242px">EpicWebHelper</span>
<span class="t r" style="left:704px;width:73.3px;top:785.65px">0%</span>
<span class="t r" style="left:784px;width:73.3px;top:785.65px">4,0 МБ</span>
<span class="t r" style="left:864px;width:73.3px;top:785.65px">0 МБ/с</span>
<span class="t r" style="left:944px;width:73.3px;top:785.65px">0 Мбит/с</span>
<span class="t r" style="left:1024px;width:73.3px;top:785.65px">0%</span>
<span class="t" style="left:1209px;top:785.65px">Очень низкое</span>
<span class="t" style="left:1318.5px;top:785.65px">Очень низкое</span>
<i class="c" style="left:704px;top:810.46px;width:80px;height:30.72px;background:#fcd6cc"></i>
<i class="c" style="left:784px;top:810.46px;width:80px;height:30.72px;background:#fcd6cc"></i>
<i class="c" style="left:864px;top:810.46px;width:80px;height:30.72px;background:#fcd6cc"></i>
<i class="c" style="left:944px;top:810.46px;width:80px;height:30.72px;background:#fcd6cc"></i>
<i class="c" style="left:1024px;top:810.46px;width:80px;height:30.72px;background:#fcd6cc"></i>
<i class="c" style="left:1202px;top:810.46px;width:109.5px;height:30.72px;background:#fcd6cc"></i>
<i class="c" style="left:1311.5px;top:810.46px;width:97px;height:30.72px;background:#fcd6cc"></i>
<svg class="ri" style="left:355.7px;top:819.12px" width="17.600" height="14" viewBox="0 0 17.600 14"><rect x=".500" y=".500" width="16.600" height="13" rx="1.200" fill="#f7f7f7" stroke="#a6a6a6"/><rect x=".500" y=".300" width="16.600" height="1.500" rx=".600" fill="#9f9f9f"/><rect x="5" y="2.500" width="7.800" height="9.500" fill="url(#exg)"/><path d="M2.900 2.600V12M14.800 2.600V12" stroke="#cfcfcf" stroke-width=".900" stroke-dasharray="1.200 1.100"/></svg>
<span class="t n" style="left:380px;top:816.37px;letter-spacing:-0.242px">EpicWebHelper</span>
<span class="t r" style="left:704px;width:73.3px;top:816.37px">0%</span>
<span class="t r" style="left:784px;width:73.3px;top:816.37px">7,7 МБ</span>
<span class="t r" style="left:864px;width:73.3px;top:816.37px">0 МБ/с</span>
<span class="t r" style="left:944px;width:73.3px;top:816.37px">0 Мбит/с</span>
<span class="t r" style="left:1024px;width:73.3px;top:816.37px">0%</span>
<span class="t" style="left:1209px;top:816.37px">Очень низкое</span>
<span class="t" style="left:1318.5px;top:816.37px">Очень низкое</span>
<!--SCROLL-->
<i class="abs" style="left:1408.500px;top:263px;width:18.500px;height:575px;background:#f4f4f4"></i>
<i class="abs" style="left:1413px;top:282px;width:10px;height:58px;background:#828282"></i>
<i class="abs" style="left:316.500px;top:838px;width:1110.500px;height:18px;background:#f4f4f4;border-top:1px solid #e9e9e9"></i>
<i class="abs" style="left:334.500px;top:842px;width:1042px;height:9.500px;background:#808080"></i>
<i class="abs" style="left:1408px;top:838px;width:19px;height:18px;background:#fafafa"></i>

</div>
<div id="bar"></div>
<!--TASKBAR-->
<!-- weather -->
<svg class="a" style="left:22px;top:961px" width="24" height="24" viewBox="0 0 24 24"><defs><linearGradient id="mg" x1="0" y1="0" x2="1" y2="1"><stop offset="0" stop-color="#ffe14d"/><stop offset=".55" stop-color="#ffc61a"/><stop offset="1" stop-color="#f39a1e"/></linearGradient></defs><path d="M14.600 1.600C19.600 4 22.400 9 21.200 14c-1.300 5.400-6.800 8.600-12.200 7.300-2.700-.6-5-2.300-6.400-4.500 4.500 1 9-1.700 10.800-6 1.300-3.100 1.300-6.300 1.200-9.200Z" fill="url(#mg)"/></svg>
<span class="tx" style="left:55.500px;top:957.500px;font-size:12.500px;letter-spacing:-0.584px">10°C</span>
<span class="tx" style="left:55.500px;top:975px;font-size:12.500px;color:#e4e4e4;letter-spacing:0.040px">Ясно</span>
<!-- start -->
<svg class="a" style="left:520px;top:961px" width="26" height="26" viewBox="0 0 26 26"><defs><linearGradient id="wg" x1="0" y1="0" x2="1" y2="1"><stop offset="0" stop-color="#6fd3fb"/><stop offset="1" stop-color="#129fe9"/></linearGradient></defs><rect x="0" y="0" width="12.300" height="12.300" rx="1" fill="url(#wg)"/><rect x="13.700" y="0" width="12.300" height="12.300" rx="1" fill="#43c2f7"/><rect x="0" y="13.700" width="12.300" height="12.300" rx="1" fill="#3ab9f4"/><rect x="13.700" y="13.700" width="12.300" height="12.300" rx="1" fill="#1ba6ec"/></svg>
<!-- search -->
<svg class="a" style="left:568px;top:960px" width="28" height="28" viewBox="0 0 28 28"><circle cx="12.600" cy="12.400" r="9.200" fill="#4a4a4e" stroke="#f4f4f4" stroke-width="2.600"/><path d="M19.600 19.400L25 24.800" stroke="#e8e8e8" stroke-width="3" stroke-linecap="round"/></svg>
<!-- task view -->
<svg class="a" style="left:616px;top:960px" width="28" height="27" viewBox="0 0 28 27"><defs><linearGradient id="tvg" x1="0" y1="0" x2="1" y2="1"><stop offset="0" stop-color="#ffffff"/><stop offset="1" stop-color="#d8d8d8"/></linearGradient></defs><rect x=".500" y="8" width="20" height="17.500" rx="1.600" fill="#6e6e6e"/><rect x="7.300" y="1.300" width="20" height="17.600" rx="1.600" fill="url(#tvg)"/><rect x="7.300" y="8" width="13.200" height="10.900" fill="#bdbdbd" opacity=".75"/></svg>
<!-- chat -->
<svg class="a" style="left:664px;top:960px" width="28" height="28" viewBox="0 0 28 28"><defs><linearGradient id="cg" x1="0" y1="0" x2="1" y2="1"><stop offset="0" stop-color="#8f7fd8"/><stop offset="1" stop-color="#5b5fc7"/></linearGradient></defs><path d="M13.600 1A12.400 12.400 0 1 1 7.600 24.300L1.400 26l1.800-5.600A12.400 12.400 0 0 1 13.600 1Z" fill="url(#cg)"/><rect x="6.400" y="8.600" width="10.800" height="9.600" rx="1.600" fill="#fff"/><path d="M18 12l3.800-2.400v8L18 15.200Z" fill="#fff"/></svg>
<!-- edge -->
<svg class="a" style="left:713px;top:959.700px" width="27" height="27.500" viewBox="0 0 27 27.500"><use href="#edgeico"/></svg>
<i class="abs" style="left:723px;top:991.500px;width:7px;height:3px;border-radius:2px;background:#9a9a9a"></i>
<!-- explorer -->
<svg class="a" style="left:761px;top:961px" width="28" height="25" viewBox="0 0 28 25"><defs><linearGradient id="fg" x1="0" y1="0" x2="0" y2="1"><stop offset="0" stop-color="#ffe066"/><stop offset="1" stop-color="#f7b928"/></linearGradient></defs><path d="M.500 2.600Q.500 1.200 1.900 1.200H8.600L11.400 4H.500Z" fill="#e9a920"/><path d="M.500 3.400H26.200Q27.500 3.400 27.500 4.700V22.600Q27.500 24 26.200 24H1.800Q.500 24 .500 22.600Z" fill="url(#fg)"/><path d="M5.200 24v-6.400Q5.200 16 6.800 16H21.200Q22.800 16 22.800 17.600V24Z" fill="#1b7fd6"/><rect x="8.800" y="19" width="10.400" height="1.800" rx=".900" fill="#0d5ba8"/></svg>
<!-- store -->
<svg class="a" style="left:809px;top:959px" width="28" height="29" viewBox="0 0 28 29"><path d="M7.400 8V5.200Q7.400 1.600 11 1.600H17Q20.600 1.600 20.600 5.200V8" fill="none" stroke="#2ea3ee" stroke-width="2"/><path d="M1.200 6.800H26.800V24Q26.800 27.600 23.200 27.600H4.800Q1.200 27.600 1.200 24Z" fill="#f3f3f3"/><rect x="8" y="11.200" width="5.400" height="5.400" fill="#f25022"/><rect x="14.600" y="11.200" width="5.400" height="5.400" fill="#7fba00"/><rect x="8" y="17.800" width="5.400" height="5.400" fill="#00a4ef"/><rect x="14.600" y="17.800" width="5.400" height="5.400" fill="#ffb900"/></svg>
<!-- settings -->
<svg class="a" style="left:857px;top:959px" width="28" height="28" viewBox="0 0 28 28"><path d="M11.400 1.200h5.200l.9 3.600 2.300 1.300 3.500-1.100 2.600 4.500-2.700 2.500v2.600l2.700 2.500-2.600 4.500-3.500-1.100-2.300 1.300-.9 3.600h-5.200l-.9-3.600-2.300-1.300-3.500 1.100-2.600-4.500 2.700-2.500V12l-2.700-2.500 2.600-4.500 3.500 1.100 2.300-1.300Z" fill="#8a8f98"/><circle cx="14" cy="13.600" r="6.200" fill="#f2f2f2"/><circle cx="14" cy="13.600" r="4.400" fill="#155fb5"/></svg>
<!-- phone link -->
<svg class="a" style="left:905px;top:961px" width="30" height="27" viewBox="0 0 30 27"><rect x="2.200" y="2" width="22" height="16.400" rx="1.400" fill="#1a78d0"/><path d="M.400 18.400h26v1.400H.400Z" fill="#1165b8"/><rect x="6.600" y="5.200" width="11.400" height="20.600" rx="1.600" fill="#35a7ee"/><rect x="6.600" y="21.500" width="11.400" height="4.300" rx="1.600" fill="#1b80d8"/></svg>
<i class="abs" style="left:919.500px;top:955px;width:20px;height:20px;border-radius:50%;background:#ef7d66"></i>
<span class="abs" style="left:919.500px;top:956.500px;width:20px;text-align:center;font-size:11px;line-height:16px;color:#1a1a1a;letter-spacing:-.300px">10</span>
<!-- task manager active -->
<i class="abs" style="left:946px;top:952px;width:44.200px;height:44.200px;border-radius:5px;background:#2d2d30;border:1px solid #39393d"></i>
<svg class="a" style="left:954.300px;top:963.500px" width="26.800" height="20.700" viewBox="0 0 18 13.200" preserveAspectRatio="none"><use href="#tmico"/></svg>
<i class="abs" style="left:958.800px;top:991px;width:17.600px;height:3.800px;border-radius:2px;background:#f08262"></i>
<!-- tray -->
<svg class="a" style="left:1217px;top:965px" width="20" height="14" viewBox="0 0 20 14"><path d="M5 13.200C2.600 13.200.800 11.600.800 9.400c0-2 1.500-3.500 3.400-3.700C5 3.200 7.200 1.400 9.800 1.400c2.600 0 4.700 1.600 5.400 4 2.200.1 4 1.800 4 3.900 0 2.200-1.800 3.900-4 3.900Z" fill="#d6d6d6"/><path d="M3 13c2-3.500 7-4.500 10.500-2.200 1.300.8 2.200 1.600 3 2.400H5Z" fill="#f7f7f7"/></svg>
<span class="tx" style="left:1255px;top:966px;font-size:12.500px">ENG</span>
<svg class="a" style="left:1301px;top:966px" width="18.400" height="14.500" viewBox="0 0 18.400 14.500" fill="none" stroke="#fff" stroke-width="1.500" stroke-linecap="round"><path d="M1 5.200C5.600 .600 12.800 .600 17.400 5.200" stroke="#6a6a6c" stroke-width="1.300"/><path d="M3.600 7.900c3.200-3 8-3 11.200 0"/><path d="M6.200 10.500c1.700-1.500 4.300-1.500 6 0"/><circle cx="9.200" cy="12.800" r="1.300" fill="#fff" stroke="none"/></svg>
<svg class="a" style="left:1327px;top:965.500px" width="19" height="17" viewBox="0 0 19 17" fill="none" stroke="#fff" stroke-width="1.300" stroke-linejoin="round" stroke-linecap="round"><path d="M1.400 5.400h3l3.600-3.800v13.800l-3.600-3.800h-3Z"/><path d="M10.400 5.600c1.300 1.700 1.300 4.100 0 5.800"/><path d="M12.800 3.200c2.400 3 2.400 7.600 0 10.600" stroke="#77777a"/><path d="M15.200 1.200c3.200 4 3.200 10.600 0 14.600" stroke="#4c4c4f"/></svg>
<svg class="a" style="left:1353px;top:964.200px" width="20" height="17" viewBox="0 0 20 17" fill="none" stroke="#fff" stroke-width="1.300" stroke-linejoin="round" stroke-linecap="round"><rect x="1.200" y="3.300" width="15.600" height="12" rx="2.800"/><path d="M17.600 7.400h.9v3.600h-.9" stroke-width="1.400"/><path d="M6.400 6h8v7.200H3.700Z" fill="#fff" stroke-width=".600"/><path d="M4.200.600L1.600 5.800H4L2.600 10" stroke="#202022" stroke-width="3.600"/><path d="M4.200.600L1.600 5.800H4L2.600 10" stroke-width="1.200"/></svg>
<span class="tx" style="right:48.700px;top:957px;font-size:12.500px;letter-spacing:-0.856px">21:12</span>
<span class="tx" style="right:47.900px;top:974.500px;font-size:12.500px;letter-spacing:0.044px">29.04.2022</span>
<svg class="a" style="left:1462px;top:965.700px" width="15.500" height="18" viewBox="0 0 15.500 18"><path d="M.300 12.400L2 9.700V6.400C2 3 4.200.600 7.400.600 10.600.600 12.800 3 12.800 6.400v3.300l1.800 2.700Z" fill="#fff"/><path d="M4.900 13.700c.3 1.700 1.300 2.900 2.500 2.900s2.200-1.200 2.500-2.900Z" fill="#fff"/><text x="4.700" y="10" font-family="Liberation Sans,sans-serif" font-size="8.600" font-weight="700" fill="#202022">z</text><text x="10.400" y="5" font-family="Liberation Sans,sans-serif" font-size="7.400" font-weight="700" fill="#fff" stroke="#202022" stroke-width="1.600" paint-order="stroke">z</text></svg>

</body></html>
